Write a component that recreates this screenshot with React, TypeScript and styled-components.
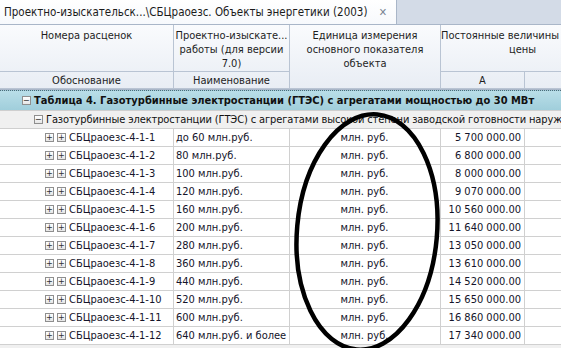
import React from "react"
import styled, { createGlobalStyle } from "styled-components"

const GlobalStyle = createGlobalStyle`
    html, body {
        margin: 0;
        padding: 0;
        background: #ffffff;
    }
    body {
        font-family: "DejaVu Sans Condensed", "DejaVu Sans", sans-serif;
        font-size: 11px;
        color: #111;
        overflow: hidden;
    }
`

const COLS = "174px 116px 151px 84px 80px"

const Window = styled.div`
    position: relative;
    width: 561px;
    height: 348px;
    overflow: hidden;
    background: #fff;
`

const TabBar = styled.div`
    display: flex;
    height: 25px;
    background: #d3dbe7;
    border-bottom: 1px solid #a9b6c8;
    box-sizing: border-box;
`

const Tab = styled.div`
    display: flex;
    align-items: center;
    justify-content: space-between;
    padding: 0 7px 0 4px;
    width: 397px;
    box-sizing: border-box;
    background: linear-gradient(#ffffff, #f7f9fc);
    border-right: 1px solid #a9b6c8;
    white-space: nowrap;
    color: #1b1b1b;
    font-size: 11.5px;
`

const Close = styled.span`
    color: #7a8594;
    font-weight: bold;
    font-size: 11px;
    margin-right: 2px;
`

const Table = styled.div`
    width: 605px;
`

const Header = styled.div`
    display: grid;
    grid-template-columns: ${COLS};
    grid-template-rows: 47px 17px;
    background: linear-gradient(#fafbfd, #e8edf4);
    border-bottom: 1px solid #a9b6c8;
    color: #1e1e1e;
`

const HeadCell = styled.div<{ $row: string; $col: string; $top?: boolean }>`
    grid-row: ${p => p.$row};
    grid-column: ${p => p.$col};
    display: flex;
    justify-content: center;
    align-items: ${p => (p.$top ? "flex-start" : "center")};
    padding-top: ${p => (p.$top ? "4px" : "2px")};
    text-align: center;
    line-height: 14px;
    border-right: 1px solid #b9c4d3;
    border-bottom: 1px solid #b9c4d3;
    box-sizing: border-box;
    overflow: hidden;
    white-space: nowrap;
`

const GroupRow = styled.div<{ $level: number }>`
    display: flex;
    align-items: center;
    height: ${p => (p.$level === 0 ? "21px" : "18px")};
    padding-left: ${p => (p.$level === 0 ? "22px" : "34px")};
    gap: 3px;
    white-space: nowrap;
    overflow: hidden;
    box-sizing: border-box;
    font-weight: ${p => (p.$level === 0 ? "bold" : "normal")};
    letter-spacing: ${p => (p.$level === 0 ? "0" : "-0.12px")};
    background: ${p => (p.$level === 0 ? "linear-gradient(#b9dee8, #a0cedb)" : "#f0f0f0")};
    border-top: ${p => (p.$level === 0 ? "1px dotted #4d6b78" : "none")};
    border-bottom: 1px solid #cfcfcf;
`

const Box = styled.span`
    display: inline-flex;
    align-items: center;
    justify-content: center;
    width: 9px;
    height: 9px;
    box-sizing: border-box;
    border: 1px solid #8f8f8f;
    background: linear-gradient(#ffffff, #e6e6e6);
    font-size: 9px;
    line-height: 1;
    color: #333;
    font-weight: normal;
    letter-spacing: 0;
    flex-shrink: 0;
`

const Row = styled.div`
    display: grid;
    grid-template-columns: ${COLS};
    height: 18px;
    border-bottom: 1px solid #d0d0d0;
    box-sizing: border-box;
`

const Cell = styled.div<{ $align?: "left" | "center" | "right" }>`
    display: flex;
    align-items: center;
    justify-content: ${p => (p.$align === "center" ? "center" : p.$align === "right" ? "flex-end" : "flex-start")};
    gap: 3px;
    padding: 0 3px 0 2px;
    border-right: 1px solid #d0d0d0;
    white-space: nowrap;
    overflow: hidden;
    color: #14142a;
`

const CodeCell = styled(Cell)`
    padding-left: 45px;
`

const Footer = styled.div`
    height: 4px;
    background: #f0f0f0;
`

const Ellipse = styled.svg`
    position: absolute;
    left: 0;
    top: 0;
    pointer-events: none;
`

const rows = [
    ["до 60 млн.руб.", "5 700 000.00"],
    ["80 млн.руб.", "6 800 000.00"],
    ["100 млн.руб.", "8 000 000.00"],
    ["120 млн.руб.", "9 070 000.00"],
    ["160 млн.руб.", "10 560 000.00"],
    ["200 млн.руб.", "11 640 000.00"],
    ["280 млн.руб.", "13 050 000.00"],
    ["360 млн.руб.", "13 610 000.00"],
    ["440 млн.руб.", "14 520 000.00"],
    ["520 млн.руб.", "15 650 000.00"],
    ["600 млн.руб.", "16 860 000.00"],
    ["640 млн.руб. и более", "17 340 000.00"],
]

export default function App() {
    return (
        <Window>
            <GlobalStyle />
            <TabBar>
                <Tab>
                    <span>Проектно-изыскательск...\СБЦраоезс. Объекты энергетики (2003)</span>
                    <Close>✕</Close>
                </Tab>
            </TabBar>
            <Table>
                <Header>
                    <HeadCell $row="1" $col="1" $top>Номера расценок</HeadCell>
                    <HeadCell $row="1" $col="2" $top>Проектно-изыскате...<br />работы (для версии<br />7.0)</HeadCell>
                    <HeadCell $row="1 / 3" $col="3" $top>Единица измерения<br />основного показателя<br />объекта</HeadCell>
                    <HeadCell $row="1" $col="4 / 6" $top>Постоянные величины базовой<br />цены</HeadCell>
                    <HeadCell $row="2" $col="1">Обоснование</HeadCell>
                    <HeadCell $row="2" $col="2">Наименование</HeadCell>
                    <HeadCell $row="2" $col="4">A</HeadCell>
                    <HeadCell $row="2" $col="5"></HeadCell>
                </Header>
                <GroupRow $level={0}>
                    <Box>−</Box>
                    Таблица 4. Газотурбинные электростанции (ГТЭС) с агрегатами мощностью до 30 МВт
                </GroupRow>
                <GroupRow $level={1}>
                    <Box>−</Box>
                    Газотурбинные электростанции (ГТЭС) с агрегатами высокой степени заводской готовности наружного размещения
                </GroupRow>
                {rows.map(([name, price], i) => (
                    <Row key={i}>
                        <CodeCell>
                            <Box>+</Box>
                            <Box>+</Box>
                            СБЦраоезс-4-1-{i + 1}
                        </CodeCell>
                        <Cell>{name}</Cell>
                        <Cell $align="center">млн. руб.</Cell>
                        <Cell $align="right">{price}</Cell>
                        <Cell />
                    </Row>
                ))}
                <Footer />
            </Table>
            <Ellipse width="561" height="348">
                <ellipse cx="367" cy="232" rx="70" ry="118" transform="rotate(5 367 232)" fill="none" stroke="#000" strokeWidth="4.5" />
            </Ellipse>
        </Window>
    )
}
